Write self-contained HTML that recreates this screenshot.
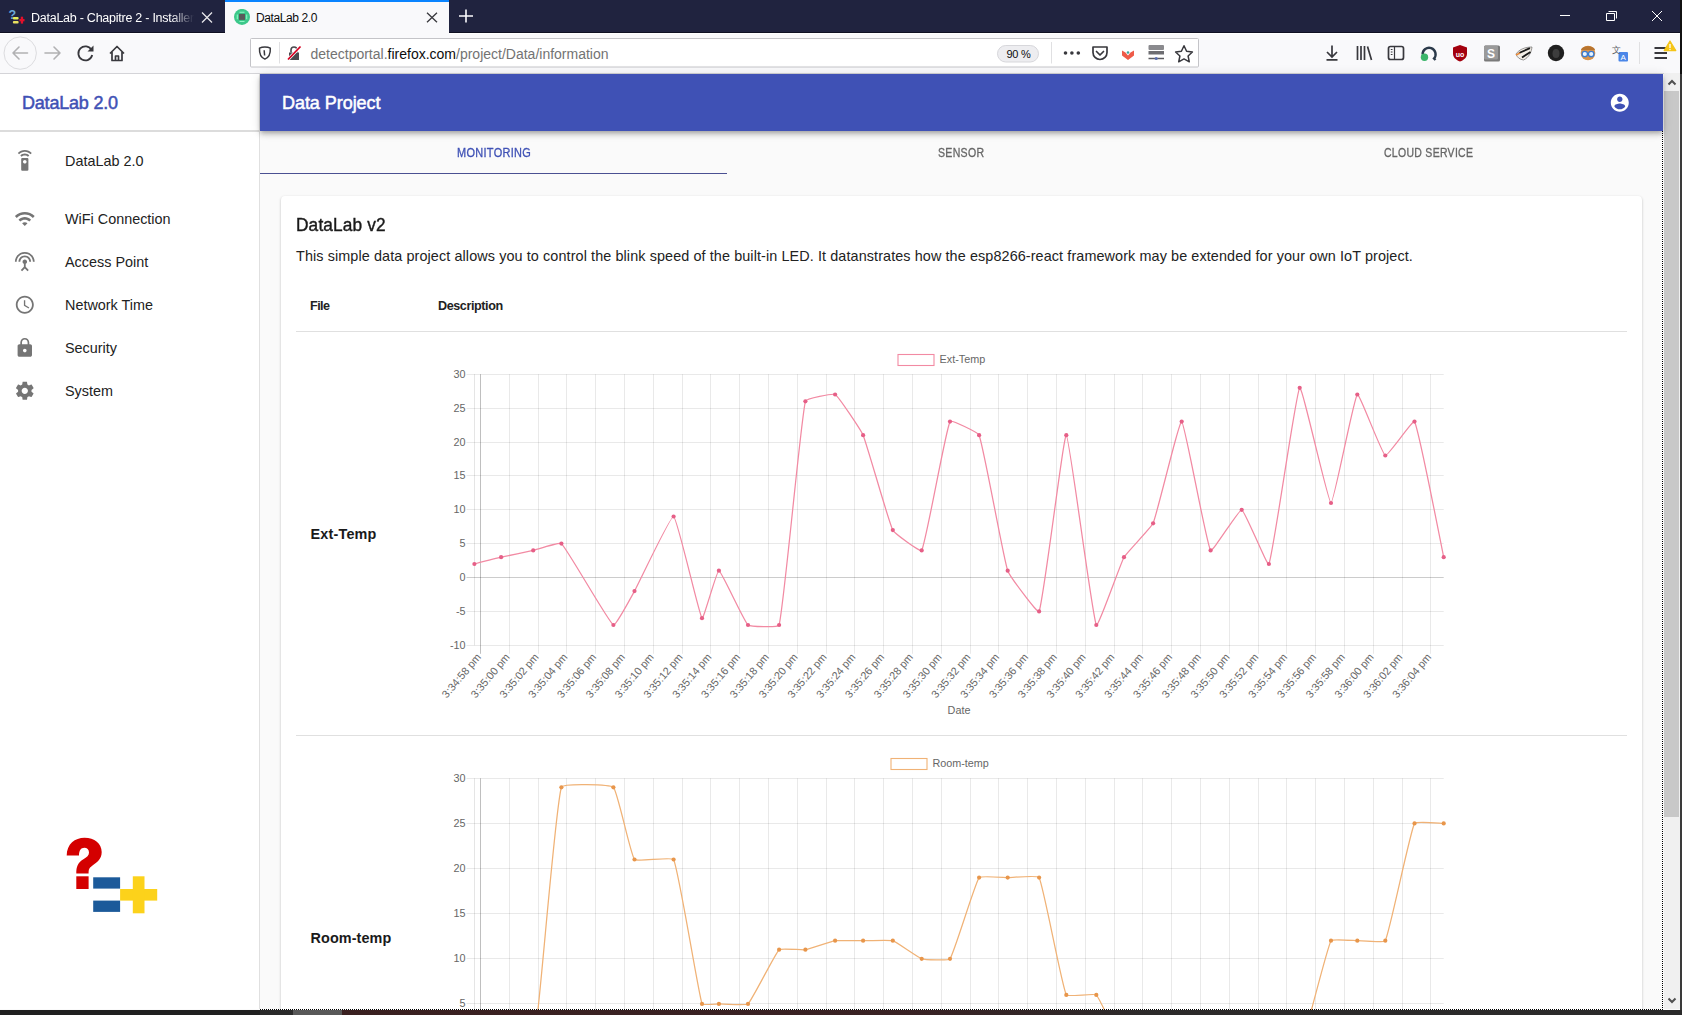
<!DOCTYPE html>
<html><head><meta charset="utf-8">
<style>
*{margin:0;padding:0;box-sizing:border-box}
html,body{width:1682px;height:1015px;overflow:hidden;background:#fafafa;font-family:"Liberation Sans",sans-serif}
.a{position:absolute}
#tabbar{left:0;top:0;width:1682px;height:33px;background:#20233f;border-bottom:1px solid #0f1022}
#nav{left:0;top:33px;width:1682px;height:41px;background:#f9f9fb;border-bottom:1px solid #d4d4d8;border-top:1px solid #fff}
#sidebar{left:0;top:74px;width:260px;height:935px;background:#fff;border-right:1px solid #e0e0e0}
#appbar{left:260px;top:74px;width:1403px;height:56.6px;background:#3f51b5;z-index:2;box-shadow:0 2px 4px -1px rgba(0,0,0,.2),0 4px 5px 0 rgba(0,0,0,.14),0 1px 10px 0 rgba(0,0,0,.12)}
#tabs{left:260px;top:130.6px;width:1403px;height:43.4px;background:#fafafa}
#card{left:281px;top:196px;width:1361px;height:900px;background:#fff;border-radius:4px;box-shadow:0 1px 3px 0 rgba(0,0,0,.2),0 1px 1px 0 rgba(0,0,0,.14),0 2px 1px -1px rgba(0,0,0,.12)}
#scroll{left:1664px;top:73px;width:16px;height:936px;background:#f0f0f0}
#rborder{left:1680px;top:0;width:2px;height:1015px;background:linear-gradient(#111 0,#111 74px,#3a3a3a 74px)}
#taskbar{left:0;top:1010px;width:1682px;height:5px;background:linear-gradient(90deg,#202020 0,#202020 260px,#2a2a2a 260px,#2a2a2a 293px,#585858 293px,#585858 342px,#3a2020 342px,#3a2224 900px,#2c2a2a 1150px,#2a2a2a 1682px)}
.txt{white-space:nowrap;line-height:1}
svg text{font-family:"Liberation Sans",sans-serif}
.yl{font-size:10.8px;fill:#666;text-anchor:end}
.xl{font-size:10.8px;fill:#666;text-anchor:end}
.lg{font-size:10.8px;fill:#666}
.at{font-size:10.8px;fill:#666;text-anchor:middle}
</style></head><body>
<div id="tabbar" class="a"></div>
<div id="nav" class="a"></div>


<!-- ===== NAV BAR ===== -->
<svg class="a" style="left:0;top:32px" width="1682" height="41" viewBox="0 32 1682 41">
  <circle cx="20.2" cy="53.1" r="16.2" fill="none" stroke="#dcdcdf" stroke-width="1"/>
  <path d="M27.5 53H13M19 47L13 53L19 59" fill="none" stroke="#b1b1b3" stroke-width="1.6" stroke-linecap="round" stroke-linejoin="round"/>
  <path d="M45 53H60M54 47L60 53L54 59" fill="none" stroke="#b1b1b3" stroke-width="1.6" stroke-linecap="round" stroke-linejoin="round"/>
  <path d="M91.5 50A7 7 0 1 0 92.2 55" fill="none" stroke="#38383d" stroke-width="1.8"/>
  <path d="M93.5 45.5V51.5H87.5Z" fill="#38383d"/>
  <path d="M110 53.5L117 46.5L124 53.5M112 52V60.5H122V52M115.5 60.5V56H118.5V60.5" fill="none" stroke="#38383d" stroke-width="1.7" stroke-linejoin="round"/>
  <rect x="250.5" y="38.5" width="948" height="28.5" rx="1" fill="#fff" stroke="#c4c4c8" stroke-width="1"/>
  <path d="M264.9 46.9C267 46.9 269 47.4 270.3 48.1C270.6 53.5 269.3 57.4 264.9 59.1C260.5 57.4 259.2 53.5 259.5 48.1C260.8 47.4 262.8 46.9 264.9 46.9Z" fill="none" stroke="#38383d" stroke-width="1.5" stroke-linejoin="round"/>
  <path d="M264.2 50.2L264.6 55.5" stroke="#38383d" stroke-width="1.5"/>
  <path d="M279.5 42V63.5" stroke="#e0e0e2" stroke-width="1"/>
  <path d="M289 52.5H299V60H289Z" fill="#4a4a4f"/>
  <path d="M291 52.5V50A3 3 0 0 1 297 50V52.5" fill="none" stroke="#4a4a4f" stroke-width="1.6"/>
  <path d="M288 59.5L300.5 46.5" stroke="#fff" stroke-width="3.2"/>
  <path d="M288 59.5L300.5 46.5" stroke="#d70022" stroke-width="1.8"/>
  <rect x="997.5" y="45.5" width="41" height="16.5" rx="8.25" fill="#ededf0" stroke="#d7d7db" stroke-width="1"/>
  <path d="M1051.5 42V63.5" stroke="#e0e0e2" stroke-width="1"/>
  <circle cx="1065.5" cy="53" r="1.8" fill="#38383d"/><circle cx="1071.9" cy="53" r="1.8" fill="#38383d"/><circle cx="1078.3" cy="53" r="1.8" fill="#38383d"/>
  <path d="M1093 47H1107V52.5A7 7 0 0 1 1093 52.5Z" fill="none" stroke="#38383d" stroke-width="1.7" stroke-linejoin="round"/>
  <path d="M1096.5 51.5L1100 55L1103.5 51.5" fill="none" stroke="#38383d" stroke-width="1.7" stroke-linecap="round" stroke-linejoin="round"/>
  <path d="M1122 50.5L1125.5 52.5L1128 55.5L1130.5 52.5L1134 50.5V55.5L1128 60L1122 55.5Z" fill="#ee5b49"/>
  <circle cx="1128" cy="52.5" r="1.3" fill="#3aa6a0"/>
  <rect x="1148.5" y="45" width="15.5" height="5" rx="1" fill="#8a8a8e"/>
  <rect x="1148.5" y="51" width="15.5" height="3.5" fill="#6e6e72"/>
  <path d="M1148.5 58.5H1164" stroke="#5a5a5e" stroke-width="1.5"/>
  <circle cx="1156.2" cy="58.5" r="1.6" fill="#5a6fb0"/>
  <path d="M1184 45.8L1186.6 51.3L1192.4 52L1188.1 56L1189.3 61.8L1184 58.9L1178.7 61.8L1179.9 56L1175.6 52L1181.4 51.3Z" fill="none" stroke="#38383d" stroke-width="1.5" stroke-linejoin="round"/>

  <path d="M1332 45.5V57M1327 52L1332 57L1337 52M1326.5 59.8H1337.5" fill="none" stroke="#38383d" stroke-width="1.7" stroke-linejoin="miter"/>
  <path d="M1357.5 46V60M1361 46V60M1364.5 46V60M1367.5 46.5L1371.5 60" fill="none" stroke="#38383d" stroke-width="1.7"/>
  <rect x="1388.5" y="46.5" width="15" height="13" rx="2" fill="none" stroke="#38383d" stroke-width="1.7"/>
  <path d="M1394.5 46.5V59.5M1390.8 49.5H1392.5M1390.8 52H1392.5M1390.8 54.5H1392.5" stroke="#38383d" stroke-width="1.2"/>
  <path d="M1422.6 54.5A6.5 6.5 0 1 1 1434 58.5L1435.5 60" fill="none" stroke="#2b3a4a" stroke-width="2.4"/>
  <circle cx="1424.5" cy="57.3" r="3.7" fill="#3bb56a"/>
  <path d="M1453 47.5L1460 45L1467 47.5V53.5C1467 57.5 1464 60 1460 61.5C1456 60 1453 57.5 1453 53.5Z" fill="#a3000e"/>
  <text x="1460" y="56.5" font-size="7" font-weight="bold" fill="#fff" text-anchor="middle" font-family="Liberation Sans">uo</text>
  <rect x="1484" y="45.5" width="16" height="16" rx="1.5" fill="#7a7a7a"/>
  <rect x="1484" y="45.5" width="14" height="14" rx="1.5" fill="#9a9a9a"/>
  <text x="1491" y="57.5" font-size="12" font-weight="bold" fill="#fff" text-anchor="middle" font-family="Liberation Sans">S</text>
  <path d="M1516 54C1519 49.5 1525 47 1532 47C1531.5 52 1529 57.5 1523.5 60C1520 59.5 1517 57.5 1516 54Z" fill="#f4efe8" stroke="#555" stroke-width="0.6"/>
  <path d="M1519 53L1530 48.2M1522 57.5L1530.5 52" stroke="#1a1a1a" stroke-width="1.9"/>
  <path d="M1516 55L1520 53" stroke="#e88a3a" stroke-width="1.5"/>
  <circle cx="1556" cy="53" r="8.2" fill="#1f1f1f"/>
  <ellipse cx="1556" cy="53.5" rx="3.5" ry="4.5" fill="#3d3d3d"/>
  <circle cx="1588" cy="53" r="7.3" fill="#d9934a"/>
  <path d="M1581 50C1582 45 1594 45 1595 50Z" fill="#b8742e"/>
  <circle cx="1584.8" cy="54" r="2.7" fill="#e8f4ff" stroke="#3b7bd0" stroke-width="1.3"/>
  <circle cx="1591.2" cy="54" r="2.7" fill="#e8f4ff" stroke="#3b7bd0" stroke-width="1.3"/>
  <rect x="1618.5" y="52" width="9.5" height="9.5" rx="1" fill="#4a86e8"/>
  <text x="1623.2" y="60" font-size="8" fill="#fff" text-anchor="middle" font-family="Liberation Sans">A</text>
  <text x="1616" y="53" font-size="9" fill="#5f6368" text-anchor="middle" font-family="Liberation Sans">文</text>
  <path d="M1639.5 42V64" stroke="#e0e0e2" stroke-width="1"/>
  <path d="M1654.5 48H1667M1654.5 53H1667M1654.5 58H1667" stroke="#38383d" stroke-width="1.8"/>
  <path d="M1670 41L1675.8 50.6H1664.2Z" fill="#f5c518" stroke="#f5c518" stroke-width="1.2" stroke-linejoin="round"/>
  <path d="M1670 44V48" stroke="#fff" stroke-width="1.3"/><circle cx="1670" cy="49.5" r="0.7" fill="#fff"/>
</svg>
<div class="a txt" style="left:310.5px;top:47px;font-size:14px;color:#737373">detectportal.<span style="color:#0c0c0d">firefox.com</span>/project/Data/information</div>
<div class="a txt" style="left:1006.5px;top:49px;font-size:11px;color:#0c0c0d;letter-spacing:-0.3px">90 %</div>

<!-- ===== TAB BAR ===== -->
<svg class="a" style="left:4px;top:4px" width="26" height="24" viewBox="4 4 26 24">
  <text x="8.4" y="19.1" font-size="12.5" font-weight="bold" fill="#6aa8d8" font-family="Liberation Sans">?</text>
  <rect x="12.9" y="17.1" width="5.7" height="2.3" rx="1" fill="#e6ec5a"/><rect x="12.9" y="21.1" width="5.7" height="2.5" rx="1" fill="#e8e060"/>
  <rect x="19.4" y="19" width="5.1" height="2.3" fill="#e3102a"/><rect x="20.8" y="16.7" width="2.3" height="6.9" fill="#e3102a"/>
</svg>
<div class="a txt" style="left:31px;top:11.7px;font-size:12.5px;color:#fff;letter-spacing:-0.25px;width:163px;overflow:hidden;-webkit-mask-image:linear-gradient(90deg,#000 86%,transparent)">DataLab - Chapitre 2 - Installer le</div>
<svg class="a" style="left:201px;top:12px" width="12" height="11" viewBox="0 0 12 11"><path d="M1 0.5L11 10.5M11 0.5L1 10.5" stroke="#e6e6ea" stroke-width="1.3"/></svg>
<div class="a" style="left:225px;top:0;width:224px;height:34px;background:#f9f9fb"></div>
<div class="a" style="left:225px;top:0;width:224px;height:2px;background:#0a84ff"></div>
<svg class="a" style="left:233px;top:9px" width="18" height="18" viewBox="0 0 18 18"><circle cx="9" cy="7.9" r="8" fill="#3cc88a"/><rect x="6" y="4.9" width="6" height="6" fill="#5a5a5a"/><path d="M6.5 3.3H11.5M6.5 12.5H11.5M4.3 5.5V10.3M13.7 5.5V10.3" stroke="#8ff5c4" stroke-width="1.1"/></svg>
<div class="a txt" style="left:256px;top:12px;font-size:12px;color:#0c0c0d;letter-spacing:-0.4px">DataLab 2.0</div>
<svg class="a" style="left:426px;top:12px" width="12" height="11" viewBox="0 0 12 11"><path d="M1 0.8L11 10.2M11 0.8L1 10.2" stroke="#38383d" stroke-width="1.3"/></svg>
<svg class="a" style="left:458px;top:8px" width="16" height="16" viewBox="0 0 16 16"><path d="M8 1.5V14.5M1 8H15" stroke="#fbfbfe" stroke-width="1.6"/></svg>
<svg class="a" style="left:1555px;top:5px" width="120" height="22" viewBox="1555 5 120 22">
  <path d="M1560 15.5H1570" stroke="#fff" stroke-width="1"/>
  <path d="M1608.5 11.5H1616.5V18.5M1606.5 13.5H1614.5V20.5H1606.5Z" fill="none" stroke="#fff" stroke-width="1"/>
  <path d="M1652 11L1662 21M1662 11L1652 21" stroke="#fff" stroke-width="1"/>
</svg>

<div id="sidebar" class="a"></div>
<div id="appbar" class="a"></div>
<div id="tabs" class="a"></div>
<div id="card" class="a"></div>

<!-- sidebar text -->
<div class="a txt" style="left:22px;top:94px;font-size:18px;color:#3f51b5;letter-spacing:-0.2px;-webkit-text-stroke:0.5px #3f51b5">DataLab 2.0</div>
<div class="a" style="left:0;top:130.4px;width:259px;height:1.2px;background:#dcdcdc"></div>
<div class="a txt" style="left:65px;top:154px;font-size:14.4px;color:#222">DataLab 2.0</div>
<div class="a txt" style="left:65px;top:212px;font-size:14.4px;color:#222">WiFi Connection</div>
<div class="a txt" style="left:65px;top:255px;font-size:14.4px;color:#222">Access Point</div>
<div class="a txt" style="left:65px;top:298px;font-size:14.4px;color:#222">Network Time</div>
<div class="a txt" style="left:65px;top:341px;font-size:14.4px;color:#222">Security</div>
<div class="a txt" style="left:65px;top:384px;font-size:14.4px;color:#222">System</div>

<!-- appbar text -->
<div class="a txt" style="z-index:3;left:282px;top:94px;font-size:18px;color:#fff;letter-spacing:-0.05px;-webkit-text-stroke:0.5px #fff">Data Project</div>

<!-- tabs -->
<div class="a txt" style="left:457px;top:146.6px;font-size:12px;color:#3f51b5;letter-spacing:0.35px;transform:scaleX(0.912);transform-origin:0 0;-webkit-text-stroke:0.3px #3f51b5">MONITORING</div>
<div class="a txt" style="left:938px;top:146.6px;font-size:12px;color:#666;letter-spacing:0.35px;transform:scaleX(0.878);transform-origin:0 0;-webkit-text-stroke:0.3px #666">SENSOR</div>
<div class="a txt" style="left:1384px;top:146.6px;font-size:12px;color:#666;letter-spacing:0.35px;transform:scaleX(0.872);transform-origin:0 0;-webkit-text-stroke:0.3px #666">CLOUD SERVICE</div>
<div class="a" style="left:260px;top:172.8px;width:467px;height:1.4px;background:#4a5092"></div>

<!-- card content -->
<div class="a txt" style="left:296px;top:216px;font-size:18px;color:#1a1a1a;letter-spacing:0.15px;transform:scaleX(0.96);transform-origin:0 0;-webkit-text-stroke:0.4px #1a1a1a">DataLab v2</div>
<div class="a txt" style="left:296px;top:249px;font-size:14.4px;color:#222;letter-spacing:0.1px">This simple data project allows you to control the blink speed of the built-in LED. It datanstrates how the esp8266-react framework may be extended for your own IoT project.</div>
<div class="a txt" style="left:310px;top:300px;font-size:12.6px;font-weight:bold;color:#222;letter-spacing:-0.55px">File</div>
<div class="a txt" style="left:438px;top:300px;font-size:12.6px;font-weight:bold;color:#222;letter-spacing:-0.41px">Description</div>
<div class="a" style="left:296px;top:331px;width:1331px;height:1px;background:#e0e0e0"></div>
<div class="a txt" style="left:310.5px;top:526.5px;font-size:14.4px;font-weight:bold;color:#1a1a1a;letter-spacing:0.2px">Ext-Temp</div>
<div class="a" style="left:296px;top:735px;width:1331px;height:1px;background:#e0e0e0"></div>
<div class="a txt" style="left:310.5px;top:930.6px;font-size:14.4px;font-weight:bold;color:#1a1a1a;letter-spacing:0.1px">Room-temp</div>

<svg class="a" style="left:0;top:0" width="1682" height="1015" viewBox="0 0 1682 1015">
<line x1="466.5" y1="374.5" x2="1443.7" y2="374.5" stroke="rgba(0,0,0,0.085)" stroke-width="1"/>
<text x="465.5" y="378.0" class="yl">30</text>
<line x1="466.5" y1="408.5" x2="1443.7" y2="408.5" stroke="rgba(0,0,0,0.085)" stroke-width="1"/>
<text x="465.5" y="412.0" class="yl">25</text>
<line x1="466.5" y1="442.5" x2="1443.7" y2="442.5" stroke="rgba(0,0,0,0.085)" stroke-width="1"/>
<text x="465.5" y="446.0" class="yl">20</text>
<line x1="466.5" y1="475.5" x2="1443.7" y2="475.5" stroke="rgba(0,0,0,0.085)" stroke-width="1"/>
<text x="465.5" y="479.0" class="yl">15</text>
<line x1="466.5" y1="509.5" x2="1443.7" y2="509.5" stroke="rgba(0,0,0,0.085)" stroke-width="1"/>
<text x="465.5" y="513.0" class="yl">10</text>
<line x1="466.5" y1="543.5" x2="1443.7" y2="543.5" stroke="rgba(0,0,0,0.085)" stroke-width="1"/>
<text x="465.5" y="547.0" class="yl">5</text>
<line x1="466.5" y1="577.5" x2="1443.7" y2="577.5" stroke="rgba(0,0,0,0.2)" stroke-width="1"/>
<text x="465.5" y="581.0" class="yl">0</text>
<line x1="466.5" y1="611.5" x2="1443.7" y2="611.5" stroke="rgba(0,0,0,0.085)" stroke-width="1"/>
<text x="465.5" y="615.0" class="yl">-5</text>
<line x1="466.5" y1="645.5" x2="1443.7" y2="645.5" stroke="rgba(0,0,0,0.085)" stroke-width="1"/>
<text x="465.5" y="649.0" class="yl">-10</text>
<line x1="474.5" y1="374.2" x2="474.5" y2="645.3" stroke="rgba(0,0,0,0.1)"/>
<line x1="480.5" y1="374.2" x2="480.5" y2="653.8" stroke="rgba(0,0,0,0.25)"/>
<line x1="509.5" y1="374.2" x2="509.5" y2="653.8" stroke="rgba(0,0,0,0.085)"/>
<line x1="538.5" y1="374.2" x2="538.5" y2="653.8" stroke="rgba(0,0,0,0.085)"/>
<line x1="566.5" y1="374.2" x2="566.5" y2="653.8" stroke="rgba(0,0,0,0.085)"/>
<line x1="595.5" y1="374.2" x2="595.5" y2="653.8" stroke="rgba(0,0,0,0.085)"/>
<line x1="624.5" y1="374.2" x2="624.5" y2="653.8" stroke="rgba(0,0,0,0.085)"/>
<line x1="653.5" y1="374.2" x2="653.5" y2="653.8" stroke="rgba(0,0,0,0.085)"/>
<line x1="682.5" y1="374.2" x2="682.5" y2="653.8" stroke="rgba(0,0,0,0.085)"/>
<line x1="710.5" y1="374.2" x2="710.5" y2="653.8" stroke="rgba(0,0,0,0.085)"/>
<line x1="739.5" y1="374.2" x2="739.5" y2="653.8" stroke="rgba(0,0,0,0.085)"/>
<line x1="768.5" y1="374.2" x2="768.5" y2="653.8" stroke="rgba(0,0,0,0.085)"/>
<line x1="797.5" y1="374.2" x2="797.5" y2="653.8" stroke="rgba(0,0,0,0.085)"/>
<line x1="826.5" y1="374.2" x2="826.5" y2="653.8" stroke="rgba(0,0,0,0.085)"/>
<line x1="854.5" y1="374.2" x2="854.5" y2="653.8" stroke="rgba(0,0,0,0.085)"/>
<line x1="883.5" y1="374.2" x2="883.5" y2="653.8" stroke="rgba(0,0,0,0.085)"/>
<line x1="912.5" y1="374.2" x2="912.5" y2="653.8" stroke="rgba(0,0,0,0.085)"/>
<line x1="941.5" y1="374.2" x2="941.5" y2="653.8" stroke="rgba(0,0,0,0.085)"/>
<line x1="970.5" y1="374.2" x2="970.5" y2="653.8" stroke="rgba(0,0,0,0.085)"/>
<line x1="998.5" y1="374.2" x2="998.5" y2="653.8" stroke="rgba(0,0,0,0.085)"/>
<line x1="1027.5" y1="374.2" x2="1027.5" y2="653.8" stroke="rgba(0,0,0,0.085)"/>
<line x1="1056.5" y1="374.2" x2="1056.5" y2="653.8" stroke="rgba(0,0,0,0.085)"/>
<line x1="1085.5" y1="374.2" x2="1085.5" y2="653.8" stroke="rgba(0,0,0,0.085)"/>
<line x1="1114.5" y1="374.2" x2="1114.5" y2="653.8" stroke="rgba(0,0,0,0.085)"/>
<line x1="1142.5" y1="374.2" x2="1142.5" y2="653.8" stroke="rgba(0,0,0,0.085)"/>
<line x1="1171.5" y1="374.2" x2="1171.5" y2="653.8" stroke="rgba(0,0,0,0.085)"/>
<line x1="1200.5" y1="374.2" x2="1200.5" y2="653.8" stroke="rgba(0,0,0,0.085)"/>
<line x1="1229.5" y1="374.2" x2="1229.5" y2="653.8" stroke="rgba(0,0,0,0.085)"/>
<line x1="1258.5" y1="374.2" x2="1258.5" y2="653.8" stroke="rgba(0,0,0,0.085)"/>
<line x1="1286.5" y1="374.2" x2="1286.5" y2="653.8" stroke="rgba(0,0,0,0.085)"/>
<line x1="1315.5" y1="374.2" x2="1315.5" y2="653.8" stroke="rgba(0,0,0,0.085)"/>
<line x1="1344.5" y1="374.2" x2="1344.5" y2="653.8" stroke="rgba(0,0,0,0.085)"/>
<line x1="1373.5" y1="374.2" x2="1373.5" y2="653.8" stroke="rgba(0,0,0,0.085)"/>
<line x1="1402.5" y1="374.2" x2="1402.5" y2="653.8" stroke="rgba(0,0,0,0.085)"/>
<line x1="1430.5" y1="374.2" x2="1430.5" y2="653.8" stroke="rgba(0,0,0,0.085)"/>
<text x="481.6" y="657.3" class="xl" transform="rotate(-50 481.6 657.3)">3:34:58 pm</text>
<text x="510.4" y="657.3" class="xl" transform="rotate(-50 510.4 657.3)">3:35:00 pm</text>
<text x="539.2" y="657.3" class="xl" transform="rotate(-50 539.2 657.3)">3:35:02 pm</text>
<text x="568.0" y="657.3" class="xl" transform="rotate(-50 568.0 657.3)">3:35:04 pm</text>
<text x="596.8" y="657.3" class="xl" transform="rotate(-50 596.8 657.3)">3:35:06 pm</text>
<text x="625.6" y="657.3" class="xl" transform="rotate(-50 625.6 657.3)">3:35:08 pm</text>
<text x="654.4" y="657.3" class="xl" transform="rotate(-50 654.4 657.3)">3:35:10 pm</text>
<text x="683.2" y="657.3" class="xl" transform="rotate(-50 683.2 657.3)">3:35:12 pm</text>
<text x="712.0" y="657.3" class="xl" transform="rotate(-50 712.0 657.3)">3:35:14 pm</text>
<text x="740.8" y="657.3" class="xl" transform="rotate(-50 740.8 657.3)">3:35:16 pm</text>
<text x="769.6" y="657.3" class="xl" transform="rotate(-50 769.6 657.3)">3:35:18 pm</text>
<text x="798.4" y="657.3" class="xl" transform="rotate(-50 798.4 657.3)">3:35:20 pm</text>
<text x="827.2" y="657.3" class="xl" transform="rotate(-50 827.2 657.3)">3:35:22 pm</text>
<text x="856.0" y="657.3" class="xl" transform="rotate(-50 856.0 657.3)">3:35:24 pm</text>
<text x="884.8" y="657.3" class="xl" transform="rotate(-50 884.8 657.3)">3:35:26 pm</text>
<text x="913.6" y="657.3" class="xl" transform="rotate(-50 913.6 657.3)">3:35:28 pm</text>
<text x="942.4" y="657.3" class="xl" transform="rotate(-50 942.4 657.3)">3:35:30 pm</text>
<text x="971.1" y="657.3" class="xl" transform="rotate(-50 971.1 657.3)">3:35:32 pm</text>
<text x="999.9" y="657.3" class="xl" transform="rotate(-50 999.9 657.3)">3:35:34 pm</text>
<text x="1028.7" y="657.3" class="xl" transform="rotate(-50 1028.7 657.3)">3:35:36 pm</text>
<text x="1057.5" y="657.3" class="xl" transform="rotate(-50 1057.5 657.3)">3:35:38 pm</text>
<text x="1086.3" y="657.3" class="xl" transform="rotate(-50 1086.3 657.3)">3:35:40 pm</text>
<text x="1115.1" y="657.3" class="xl" transform="rotate(-50 1115.1 657.3)">3:35:42 pm</text>
<text x="1143.9" y="657.3" class="xl" transform="rotate(-50 1143.9 657.3)">3:35:44 pm</text>
<text x="1172.7" y="657.3" class="xl" transform="rotate(-50 1172.7 657.3)">3:35:46 pm</text>
<text x="1201.5" y="657.3" class="xl" transform="rotate(-50 1201.5 657.3)">3:35:48 pm</text>
<text x="1230.3" y="657.3" class="xl" transform="rotate(-50 1230.3 657.3)">3:35:50 pm</text>
<text x="1259.1" y="657.3" class="xl" transform="rotate(-50 1259.1 657.3)">3:35:52 pm</text>
<text x="1287.9" y="657.3" class="xl" transform="rotate(-50 1287.9 657.3)">3:35:54 pm</text>
<text x="1316.7" y="657.3" class="xl" transform="rotate(-50 1316.7 657.3)">3:35:56 pm</text>
<text x="1345.5" y="657.3" class="xl" transform="rotate(-50 1345.5 657.3)">3:35:58 pm</text>
<text x="1374.3" y="657.3" class="xl" transform="rotate(-50 1374.3 657.3)">3:36:00 pm</text>
<text x="1403.1" y="657.3" class="xl" transform="rotate(-50 1403.1 657.3)">3:36:02 pm</text>
<text x="1431.9" y="657.3" class="xl" transform="rotate(-50 1431.9 657.3)">3:36:04 pm</text>
<path d="M474.4 564.0 C477.1 563.3 498.4 557.8 501.1 557.2 C504.3 556.5 530.0 551.1 533.2 550.4 C536.0 549.8 559.5 541.9 561.4 543.6 C567.6 549.4 608.2 621.6 613.4 625.0 C615.5 626.4 632.6 594.6 634.5 591.1 C638.6 583.7 670.6 515.3 673.6 516.5 C677.4 518.0 698.9 614.5 702.0 618.2 C703.5 619.9 716.8 570.4 718.9 570.7 C721.4 571.1 744.0 621.4 748.0 625.0 C750.0 626.8 778.4 627.7 779.1 625.0 C784.1 605.3 800.5 421.6 805.4 401.3 C806.1 398.6 832.9 393.2 835.1 394.5 C838.7 396.6 861.2 430.7 863.1 435.2 C867.0 444.3 888.5 521.6 892.8 530.1 C894.3 533.1 920.5 552.7 921.7 550.4 C926.2 541.9 945.4 430.9 950.0 421.6 C951.1 419.4 978.0 432.4 979.1 435.2 C983.8 447.3 1003.3 557.9 1007.7 570.7 C1009.3 575.5 1037.8 614.4 1039.1 611.4 C1043.6 600.9 1063.5 434.5 1066.3 435.2 C1069.3 435.9 1092.1 616.1 1096.3 625.0 C1097.9 628.3 1120.5 563.5 1124.0 557.2 C1126.2 553.3 1151.4 527.3 1153.1 523.3 C1157.2 513.8 1179.1 420.4 1181.7 421.6 C1184.9 423.1 1206.3 544.1 1210.6 550.4 C1212.3 552.9 1239.0 509.1 1241.7 509.8 C1244.9 510.5 1267.4 567.1 1268.9 564.0 C1273.2 554.9 1296.0 391.4 1299.7 387.8 C1302.2 385.3 1328.0 502.6 1331.0 503.0 C1333.8 503.3 1353.9 397.5 1357.3 394.5 C1359.3 392.8 1381.9 453.9 1385.3 455.5 C1387.6 456.6 1413.1 419.2 1414.5 421.6 C1418.9 429.3 1440.8 543.6 1443.7 557.2" fill="none" stroke="rgb(242,138,163)" stroke-width="1.25"/>
<circle cx="474.4" cy="564.0" r="2.1" fill="rgb(230,95,135)"/>
<circle cx="501.1" cy="557.2" r="2.1" fill="rgb(230,95,135)"/>
<circle cx="533.2" cy="550.4" r="2.1" fill="rgb(230,95,135)"/>
<circle cx="561.4" cy="543.6" r="2.1" fill="rgb(230,95,135)"/>
<circle cx="613.4" cy="625.0" r="2.1" fill="rgb(230,95,135)"/>
<circle cx="634.5" cy="591.1" r="2.1" fill="rgb(230,95,135)"/>
<circle cx="673.6" cy="516.5" r="2.1" fill="rgb(230,95,135)"/>
<circle cx="702.0" cy="618.2" r="2.1" fill="rgb(230,95,135)"/>
<circle cx="718.9" cy="570.7" r="2.1" fill="rgb(230,95,135)"/>
<circle cx="748.0" cy="625.0" r="2.1" fill="rgb(230,95,135)"/>
<circle cx="779.1" cy="625.0" r="2.1" fill="rgb(230,95,135)"/>
<circle cx="805.4" cy="401.3" r="2.1" fill="rgb(230,95,135)"/>
<circle cx="835.1" cy="394.5" r="2.1" fill="rgb(230,95,135)"/>
<circle cx="863.1" cy="435.2" r="2.1" fill="rgb(230,95,135)"/>
<circle cx="892.8" cy="530.1" r="2.1" fill="rgb(230,95,135)"/>
<circle cx="921.7" cy="550.4" r="2.1" fill="rgb(230,95,135)"/>
<circle cx="950.0" cy="421.6" r="2.1" fill="rgb(230,95,135)"/>
<circle cx="979.1" cy="435.2" r="2.1" fill="rgb(230,95,135)"/>
<circle cx="1007.7" cy="570.7" r="2.1" fill="rgb(230,95,135)"/>
<circle cx="1039.1" cy="611.4" r="2.1" fill="rgb(230,95,135)"/>
<circle cx="1066.3" cy="435.2" r="2.1" fill="rgb(230,95,135)"/>
<circle cx="1096.3" cy="625.0" r="2.1" fill="rgb(230,95,135)"/>
<circle cx="1124.0" cy="557.2" r="2.1" fill="rgb(230,95,135)"/>
<circle cx="1153.1" cy="523.3" r="2.1" fill="rgb(230,95,135)"/>
<circle cx="1181.7" cy="421.6" r="2.1" fill="rgb(230,95,135)"/>
<circle cx="1210.6" cy="550.4" r="2.1" fill="rgb(230,95,135)"/>
<circle cx="1241.7" cy="509.8" r="2.1" fill="rgb(230,95,135)"/>
<circle cx="1268.9" cy="564.0" r="2.1" fill="rgb(230,95,135)"/>
<circle cx="1299.7" cy="387.8" r="2.1" fill="rgb(230,95,135)"/>
<circle cx="1331.0" cy="503.0" r="2.1" fill="rgb(230,95,135)"/>
<circle cx="1357.3" cy="394.5" r="2.1" fill="rgb(230,95,135)"/>
<circle cx="1385.3" cy="455.5" r="2.1" fill="rgb(230,95,135)"/>
<circle cx="1414.5" cy="421.6" r="2.1" fill="rgb(230,95,135)"/>
<circle cx="1443.7" cy="557.2" r="2.1" fill="rgb(230,95,135)"/>
<rect x="898.0" y="354.5" width="36.0" height="11.0" fill="none" stroke="rgb(242,138,163)" stroke-width="1.1"/>
<text x="939.6" y="363.2" class="lg">Ext-Temp</text>
<text x="959" y="714" class="at">Date</text>
<line x1="466.5" y1="778.5" x2="1443.7" y2="778.5" stroke="rgba(0,0,0,0.085)" stroke-width="1"/>
<text x="465.5" y="782.0" class="yl">30</text>
<line x1="466.5" y1="823.5" x2="1443.7" y2="823.5" stroke="rgba(0,0,0,0.085)" stroke-width="1"/>
<text x="465.5" y="827.0" class="yl">25</text>
<line x1="466.5" y1="868.5" x2="1443.7" y2="868.5" stroke="rgba(0,0,0,0.085)" stroke-width="1"/>
<text x="465.5" y="872.0" class="yl">20</text>
<line x1="466.5" y1="913.5" x2="1443.7" y2="913.5" stroke="rgba(0,0,0,0.085)" stroke-width="1"/>
<text x="465.5" y="917.0" class="yl">15</text>
<line x1="466.5" y1="958.5" x2="1443.7" y2="958.5" stroke="rgba(0,0,0,0.085)" stroke-width="1"/>
<text x="465.5" y="962.0" class="yl">10</text>
<line x1="466.5" y1="1003.5" x2="1443.7" y2="1003.5" stroke="rgba(0,0,0,0.085)" stroke-width="1"/>
<text x="465.5" y="1007.0" class="yl">5</text>
<line x1="466.5" y1="1048.5" x2="1443.7" y2="1048.5" stroke="rgba(0,0,0,0.2)" stroke-width="1"/>
<text x="465.5" y="1052.0" class="yl">0</text>
<line x1="474.5" y1="778.3" x2="474.5" y2="1049.0" stroke="rgba(0,0,0,0.1)"/>
<line x1="480.5" y1="778.3" x2="480.5" y2="1057.5" stroke="rgba(0,0,0,0.25)"/>
<line x1="509.5" y1="778.3" x2="509.5" y2="1057.5" stroke="rgba(0,0,0,0.085)"/>
<line x1="538.5" y1="778.3" x2="538.5" y2="1057.5" stroke="rgba(0,0,0,0.085)"/>
<line x1="566.5" y1="778.3" x2="566.5" y2="1057.5" stroke="rgba(0,0,0,0.085)"/>
<line x1="595.5" y1="778.3" x2="595.5" y2="1057.5" stroke="rgba(0,0,0,0.085)"/>
<line x1="624.5" y1="778.3" x2="624.5" y2="1057.5" stroke="rgba(0,0,0,0.085)"/>
<line x1="653.5" y1="778.3" x2="653.5" y2="1057.5" stroke="rgba(0,0,0,0.085)"/>
<line x1="682.5" y1="778.3" x2="682.5" y2="1057.5" stroke="rgba(0,0,0,0.085)"/>
<line x1="710.5" y1="778.3" x2="710.5" y2="1057.5" stroke="rgba(0,0,0,0.085)"/>
<line x1="739.5" y1="778.3" x2="739.5" y2="1057.5" stroke="rgba(0,0,0,0.085)"/>
<line x1="768.5" y1="778.3" x2="768.5" y2="1057.5" stroke="rgba(0,0,0,0.085)"/>
<line x1="797.5" y1="778.3" x2="797.5" y2="1057.5" stroke="rgba(0,0,0,0.085)"/>
<line x1="826.5" y1="778.3" x2="826.5" y2="1057.5" stroke="rgba(0,0,0,0.085)"/>
<line x1="854.5" y1="778.3" x2="854.5" y2="1057.5" stroke="rgba(0,0,0,0.085)"/>
<line x1="883.5" y1="778.3" x2="883.5" y2="1057.5" stroke="rgba(0,0,0,0.085)"/>
<line x1="912.5" y1="778.3" x2="912.5" y2="1057.5" stroke="rgba(0,0,0,0.085)"/>
<line x1="941.5" y1="778.3" x2="941.5" y2="1057.5" stroke="rgba(0,0,0,0.085)"/>
<line x1="970.5" y1="778.3" x2="970.5" y2="1057.5" stroke="rgba(0,0,0,0.085)"/>
<line x1="998.5" y1="778.3" x2="998.5" y2="1057.5" stroke="rgba(0,0,0,0.085)"/>
<line x1="1027.5" y1="778.3" x2="1027.5" y2="1057.5" stroke="rgba(0,0,0,0.085)"/>
<line x1="1056.5" y1="778.3" x2="1056.5" y2="1057.5" stroke="rgba(0,0,0,0.085)"/>
<line x1="1085.5" y1="778.3" x2="1085.5" y2="1057.5" stroke="rgba(0,0,0,0.085)"/>
<line x1="1114.5" y1="778.3" x2="1114.5" y2="1057.5" stroke="rgba(0,0,0,0.085)"/>
<line x1="1142.5" y1="778.3" x2="1142.5" y2="1057.5" stroke="rgba(0,0,0,0.085)"/>
<line x1="1171.5" y1="778.3" x2="1171.5" y2="1057.5" stroke="rgba(0,0,0,0.085)"/>
<line x1="1200.5" y1="778.3" x2="1200.5" y2="1057.5" stroke="rgba(0,0,0,0.085)"/>
<line x1="1229.5" y1="778.3" x2="1229.5" y2="1057.5" stroke="rgba(0,0,0,0.085)"/>
<line x1="1258.5" y1="778.3" x2="1258.5" y2="1057.5" stroke="rgba(0,0,0,0.085)"/>
<line x1="1286.5" y1="778.3" x2="1286.5" y2="1057.5" stroke="rgba(0,0,0,0.085)"/>
<line x1="1315.5" y1="778.3" x2="1315.5" y2="1057.5" stroke="rgba(0,0,0,0.085)"/>
<line x1="1344.5" y1="778.3" x2="1344.5" y2="1057.5" stroke="rgba(0,0,0,0.085)"/>
<line x1="1373.5" y1="778.3" x2="1373.5" y2="1057.5" stroke="rgba(0,0,0,0.085)"/>
<line x1="1402.5" y1="778.3" x2="1402.5" y2="1057.5" stroke="rgba(0,0,0,0.085)"/>
<line x1="1430.5" y1="778.3" x2="1430.5" y2="1057.5" stroke="rgba(0,0,0,0.085)"/>
<path d="M474.4 1049.0 C477.1 1049.0 498.4 1049.0 501.1 1049.0 C504.3 1049.0 532.5 1049.0 533.2 1049.0 C538.6 1025.7 554.7 809.2 561.4 787.3 C562.7 783.0 610.4 784.4 613.4 787.3 C617.7 791.6 630.5 854.8 634.5 859.5 C636.6 862.0 672.2 856.5 673.6 859.5 C678.9 870.9 697.9 990.9 702.0 1003.9 C702.5 1005.4 717.2 1003.9 718.9 1003.9 C721.8 1003.9 746.1 1005.6 748.0 1003.9 C752.1 1000.2 775.1 953.6 779.1 949.7 C780.8 948.1 802.8 950.2 805.4 949.7 C808.4 949.3 832.1 941.2 835.1 940.7 C837.8 940.3 860.3 940.7 863.1 940.7 C866.1 940.7 890.1 939.9 892.8 940.7 C895.9 941.7 918.6 957.8 921.7 958.8 C924.3 959.6 948.6 960.8 950.0 958.8 C954.3 952.7 974.8 883.7 979.1 877.6 C980.5 875.5 1004.8 877.6 1007.7 877.6 C1010.8 877.6 1037.9 875.1 1039.1 877.6 C1043.7 886.9 1061.7 985.5 1066.3 994.9 C1067.4 997.2 1094.4 993.1 1096.3 994.9 C1100.2 998.5 1120.2 1045.3 1124.0 1049.0 C1125.8 1049.0 1150.2 1049.0 1153.1 1049.0 C1156.0 1049.0 1178.8 1049.0 1181.7 1049.0 C1184.6 1049.0 1207.7 1049.0 1210.6 1049.0 C1213.7 1049.0 1238.6 1049.0 1241.7 1049.0 C1244.4 1049.0 1266.2 1049.0 1268.9 1049.0 C1272.0 1049.0 1298.4 1049.0 1299.7 1049.0 C1304.6 1040.5 1326.3 949.5 1331.0 940.7 C1332.1 938.7 1354.7 940.7 1357.3 940.7 C1360.1 940.7 1384.2 942.9 1385.3 940.7 C1389.9 931.2 1409.8 832.9 1414.5 823.4 C1415.6 821.1 1440.8 823.4 1443.7 823.4" fill="none" stroke="rgb(240,178,118)" stroke-width="1.25"/>
<circle cx="474.4" cy="1049.0" r="2.1" fill="rgb(232,150,75)"/>
<circle cx="501.1" cy="1049.0" r="2.1" fill="rgb(232,150,75)"/>
<circle cx="533.2" cy="1049.0" r="2.1" fill="rgb(232,150,75)"/>
<circle cx="561.4" cy="787.3" r="2.1" fill="rgb(232,150,75)"/>
<circle cx="613.4" cy="787.3" r="2.1" fill="rgb(232,150,75)"/>
<circle cx="634.5" cy="859.5" r="2.1" fill="rgb(232,150,75)"/>
<circle cx="673.6" cy="859.5" r="2.1" fill="rgb(232,150,75)"/>
<circle cx="702.0" cy="1003.9" r="2.1" fill="rgb(232,150,75)"/>
<circle cx="718.9" cy="1003.9" r="2.1" fill="rgb(232,150,75)"/>
<circle cx="748.0" cy="1003.9" r="2.1" fill="rgb(232,150,75)"/>
<circle cx="779.1" cy="949.7" r="2.1" fill="rgb(232,150,75)"/>
<circle cx="805.4" cy="949.7" r="2.1" fill="rgb(232,150,75)"/>
<circle cx="835.1" cy="940.7" r="2.1" fill="rgb(232,150,75)"/>
<circle cx="863.1" cy="940.7" r="2.1" fill="rgb(232,150,75)"/>
<circle cx="892.8" cy="940.7" r="2.1" fill="rgb(232,150,75)"/>
<circle cx="921.7" cy="958.8" r="2.1" fill="rgb(232,150,75)"/>
<circle cx="950.0" cy="958.8" r="2.1" fill="rgb(232,150,75)"/>
<circle cx="979.1" cy="877.6" r="2.1" fill="rgb(232,150,75)"/>
<circle cx="1007.7" cy="877.6" r="2.1" fill="rgb(232,150,75)"/>
<circle cx="1039.1" cy="877.6" r="2.1" fill="rgb(232,150,75)"/>
<circle cx="1066.3" cy="994.9" r="2.1" fill="rgb(232,150,75)"/>
<circle cx="1096.3" cy="994.9" r="2.1" fill="rgb(232,150,75)"/>
<circle cx="1124.0" cy="1049.0" r="2.1" fill="rgb(232,150,75)"/>
<circle cx="1153.1" cy="1049.0" r="2.1" fill="rgb(232,150,75)"/>
<circle cx="1181.7" cy="1049.0" r="2.1" fill="rgb(232,150,75)"/>
<circle cx="1210.6" cy="1049.0" r="2.1" fill="rgb(232,150,75)"/>
<circle cx="1241.7" cy="1049.0" r="2.1" fill="rgb(232,150,75)"/>
<circle cx="1268.9" cy="1049.0" r="2.1" fill="rgb(232,150,75)"/>
<circle cx="1299.7" cy="1049.0" r="2.1" fill="rgb(232,150,75)"/>
<circle cx="1331.0" cy="940.7" r="2.1" fill="rgb(232,150,75)"/>
<circle cx="1357.3" cy="940.7" r="2.1" fill="rgb(232,150,75)"/>
<circle cx="1385.3" cy="940.7" r="2.1" fill="rgb(232,150,75)"/>
<circle cx="1414.5" cy="823.4" r="2.1" fill="rgb(232,150,75)"/>
<circle cx="1443.7" cy="823.4" r="2.1" fill="rgb(232,150,75)"/>
<rect x="891.0" y="758.5" width="36.0" height="11.0" fill="none" stroke="rgb(240,178,118)" stroke-width="1.1"/>
<text x="932.4" y="767.4" class="lg">Room-temp</text>
</svg>


<!-- sidebar icons -->
<svg class="a" style="left:14.2px;top:149.7px" width="21.6" height="21.6" viewBox="0 0 24 24"><path d="M15 9H9c-.55 0-1 .45-1 1v12c0 .55.45 1 1 1h6c.55 0 1-.45 1-1V10c0-.55-.45-1-1-1zm-3 6c-1.1 0-2-.9-2-2s.9-2 2-2 2 .9 2 2-.9 2-2 2zM7.05 6.05l1.41 1.41C9.37 6.56 10.62 6 12 6s2.63.56 3.540 1.46l1.41-1.41C15.68 4.78 13.930 4 12 4s-3.68.78-4.95 2.05zM12 0C8.96 0 6.21 1.23 4.22 3.22l1.41 1.41C7.26 3.01 9.51 2 12 2s4.74 1.01 6.36 2.64l1.41-1.41C17.79 1.23 15.04 0 12 0z" fill="#757575"/></svg>
<svg class="a" style="left:14.2px;top:207.7px" width="21.6" height="21.6" viewBox="0 0 24 24"><path d="M1 9l2 2c4.97-4.97 13.03-4.97 18 0l2-2C16.93 2.93 7.08 2.93 1 9zm8 8l3 3 3-3c-1.65-1.66-4.34-1.66-6 0zm-4-4l2 2c2.76-2.76 7.24-2.76 10 0l2-2C15.14 9.14 8.87 9.14 5 13z" fill="#757575"/></svg>
<svg class="a" style="left:14.2px;top:250.8px" width="21.6" height="21.6" viewBox="0 0 24 24"><path d="M12 5c-3.87 0-7 3.13-7 7h2c0-2.76 2.24-5 5-5s5 2.24 5 5h2c0-3.87-3.13-7-7-7zm1 9.29c.88-.39 1.5-1.26 1.5-2.29 0-1.38-1.12-2.5-2.5-2.5S9.5 10.62 9.5 12c0 1.02.62 1.9 1.5 2.29v3.3L7.59 21 9 22.41l3-3 3 3L16.41 21 13 17.590v-3.3zM12 1C5.93 1 1 5.93 1 12h2c0-4.97 4.03-9 9-9s9 4.03 9 9h2c0-6.07-4.930-11-11-11z" fill="#757575"/></svg>
<svg class="a" style="left:14.2px;top:294.2px" width="21.6" height="21.6" viewBox="0 0 24 24"><path d="M11.99 2C6.47 2 2 6.48 2 12s4.47 10 9.99 10C17.52 22 22 17.52 22 12S17.52 2 11.99 2zM12 20c-4.42 0-8-3.58-8-8s3.58-8 8-8 8 3.58 8 8-3.58 8-8 8zm.5-13H11v6l5.25 3.15.75-1.23-4.5-2.67z" fill="#757575"/></svg>
<svg class="a" style="left:14.2px;top:337.1px" width="21.6" height="21.6" viewBox="0 0 24 24"><path d="M18 8h-1V6c0-2.76-2.24-5-5-5S7 3.24 7 6v2H6c-1.1 0-2 .9-2 2v10c0 1.1.9 2 2 2h12c1.1 0 2-.9 2-2V10c0-1.1-.9-2-2-2zm-6 9c-1.1 0-2-.9-2-2s.9-2 2-2 2 .9 2 2-.9 2-2 2zm3.1-9H8.9V6c0-1.71 1.39-3.1 3.1-3.1 1.71 0 3.1 1.39 3.1 3.1v2z" fill="#757575"/></svg>
<svg class="a" style="left:14.2px;top:379.7px" width="21.6" height="21.6" viewBox="0 0 24 24"><path d="M19.43 12.98c.04-.32.07-.64.07-.98s-.03-.66-.07-.98l2.11-1.65c.19-.15.24-.42.12-.64l-2-3.46c-.12-.22-.39-.3-.61-.22l-2.49 1c-.52-.4-1.08-.73-1.69-.98l-.38-2.65C14.46 2.18 14.25 2 14 2h-4c-.25 0-.46.18-.49.42l-.38 2.65c-.61.25-1.170.59-1.69.98l-2.49-1c-.23-.09-.49 0-.61.22l-2 3.46c-.13.22-.07.49.12.64l2.11 1.65c-.04.32-.07.65-.07.98s.03.66.07.98l-2.11 1.65c-.19.15-.24.42-.12.64l2 3.46c.12.22.39.3.61.22l2.49-1c.52.4 1.08.73 1.69.98l.38 2.65c.03.24.24.42.49.42h4c.25 0 .46-.18.49-.42l.38-2.65c.61-.25 1.17-.59 1.69-.98l2.49 1c.23.09.49 0 .61-.22l2-3.46c.12-.22.07-.49-.12-.64l-2.11-1.65zM12 15.5c-1.93 0-3.5-1.57-3.5-3.5s1.57-3.5 3.5-3.5 3.5 1.57 3.5 3.5-1.57 3.5-3.5 3.5z" fill="#757575"/></svg>
<svg class="a" style="left:1609.2px;top:92.1px;z-index:3" width="21.6" height="21.6" viewBox="0 0 24 24"><path d="M12 2C6.48 2 2 6.48 2 12s4.48 10 10 10 10-4.48 10-10S17.52 2 12 2zm0 3c1.66 0 3 1.34 3 3s-1.34 3-3 3-3-1.34-3-3 1.34-3 3-3zm0 14.2c-2.5 0-4.71-1.28-6-3.22.03-1.99 4-3.08 6-3.08 1.99 0 5.970 1.09 6 3.08-1.29 1.94-3.5 3.22-6 3.22z" fill="#fff"/></svg>

<!-- logo -->
<svg class="a" style="left:60px;top:830px" width="105" height="90" viewBox="60 830 105 90">
  <path d="M66.7 855.5C66.7 844 75 837.7 84.5 837.7C94.5 837.7 101.7 843.5 101.7 852C101.7 859 97 862.5 92.5 865.5C89 868 88.6 869.5 88.6 873.5H76.3C76.3 867 77.5 863 83 859.5C87 857 89 855.5 89 852.5C89 849.5 87 847.8 84.3 847.8C81 847.8 79 850.5 79 855.5Z" fill="#d40000"/>
  <rect x="76.3" y="876.3" width="12.3" height="12.7" fill="#d40000"/>
  <rect x="93.2" y="877.3" width="26.9" height="11.3" fill="#1c5a9a"/>
  <rect x="93.2" y="900.6" width="26.9" height="11.3" fill="#1c5a9a"/>
  <rect x="120.1" y="889" width="37.1" height="11.6" fill="#fcd21b"/>
  <rect x="132.8" y="876.3" width="11.7" height="37" fill="#fcd21b"/>
</svg>

<!-- focus outline -->
<div class="a" style="left:1662px;top:131px;width:1px;height:879px;background-image:linear-gradient(#000 50%,transparent 50%);background-size:1px 2px"></div>
<div class="a" style="left:260px;top:1009px;width:1403px;height:1px;background-image:linear-gradient(90deg,#000 50%,transparent 50%);background-size:2px 1px"></div>
<div id="scroll" class="a"></div>
<div class="a" style="left:1664px;top:91px;width:15px;height:725.7px;background:#c8c8c8"></div>
<svg class="a" style="left:1664px;top:73px" width="16" height="18" viewBox="0 0 16 18"><path d="M4.5 11.5L8 8L11.5 11.5" fill="none" stroke="#505050" stroke-width="2"/></svg>
<svg class="a" style="left:1664px;top:992px" width="16" height="17" viewBox="0 0 16 17"><path d="M4.5 6.5L8 10L11.5 6.5" fill="none" stroke="#505050" stroke-width="2"/></svg>
<div id="rborder" class="a"></div>
<div id="taskbar" class="a"></div>
</body></html>
